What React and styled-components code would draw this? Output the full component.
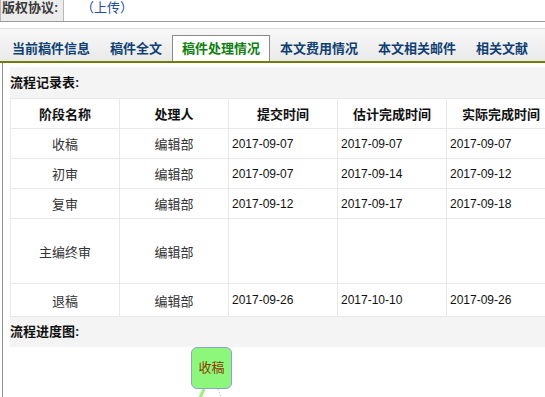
import React from "react";
import styled, { createGlobalStyle } from "styled-components";

const GlobalStyle = createGlobalStyle`
  body {
    margin: 0;
    background: #fff;
    overflow: hidden;
    font-family: "Liberation Sans", Arial, "Noto Sans CJK SC", sans-serif;
    font-size: 12px;
    color: #222;
  }
`;

const Page = styled.div`
  width: 560px;
`;

const CopyrightRow = styled.div`
  display: flex;
  height: 21px;
  border-bottom: 1px solid #9a9a9a;
`;

const CopyrightLabel = styled.div`
  width: 61px;
  padding-left: 1px;
  border-left: 1px solid #b8b8b8;
  border-right: 1px solid #b8b8b8;
  background: #ececec;
  font-weight: bold;
  font-size: 13px;
  line-height: 15px;
  color: #3a3a3a;
`;

const CopyrightValue = styled.div`
  padding-left: 17px;
  font-size: 13px;
  line-height: 15px;
  color: #1d4d9c;
`;

const TabBar = styled.div`
  display: flex;
  align-items: flex-end;
  margin-top: 6px;
  height: 32px;
  padding-left: 2px;
  border-top: 1px solid #dcdcdc;
  border-bottom: 2px solid #6f7d05;
  background: linear-gradient(#f8f8f8, #e9e9e9);
`;

const Tab = styled.div`
  height: 25px;
  padding: 0 9px;
  border: 1px solid ${(p) => (p.$active ? "#8a8a8a" : "transparent")};
  border-bottom: none;
  background: ${(p) => (p.$active ? "#fff" : "transparent")};
  color: ${(p) => (p.$active ? "#108010" : "#103f73")};
  font-weight: bold;
  font-size: 13px;
  line-height: 25px;
  white-space: nowrap;
`;

const Panel = styled.div`
  margin-left: 2px;
  padding: 4px 0 0 7px;
  border-left: 1px solid #8e8e8e;
  height: 400px;
`;

const Inner = styled.div`
  background: #f4f4f4;
`;

const SectionTitle = styled.div`
  height: ${(p) => p.$h}px;
  line-height: ${(p) => p.$h}px;
  font-weight: bold;
  font-size: 13px;
  color: #111;
`;

const Table = styled.table`
  border-collapse: collapse;
  background: #fff;
`;

const HeadCell = styled.th`
  width: 108px;
  height: 29px;
  padding: 0;
  border: 1px solid #e8e8e8;
  font-size: 13px;
  font-weight: bold;
  color: #111;
  text-align: center;
  white-space: nowrap;
`;

const Cell = styled.td`
  height: ${(p) => p.$h || 29}px;
  padding: 0 3px;
  border: 1px solid #e8e8e8;
  font-size: ${(p) => (p.$date ? 12 : 13)}px;
  color: ${(p) => (p.$date ? "#111" : "#333")};
  text-align: ${(p) => (p.$date ? "left" : "center")};
  white-space: nowrap;
`;

const Diagram = styled.div`
  position: relative;
  height: 60px;
  background: #fff;
`;

const Node = styled.div`
  position: absolute;
  left: 181px;
  top: 0;
  width: 39px;
  height: 40px;
  border: 1px solid #8ea3d2;
  border-radius: 6px;
  background: #8df77c;
  color: #8a3c00;
  font-size: 13px;
  line-height: 40px;
  text-align: center;
`;

const Links = styled.svg`
  position: absolute;
  left: 0;
  top: 0;
`;

const rows = [
  { name: "收稿", who: "编辑部", a: "2017-09-07", b: "2017-09-07", c: "2017-09-07" },
  { name: "初审", who: "编辑部", a: "2017-09-07", b: "2017-09-14", c: "2017-09-12" },
  { name: "复审", who: "编辑部", a: "2017-09-12", b: "2017-09-17", c: "2017-09-18" },
  { name: "主编终审", who: "编辑部", a: "", b: "", c: "", h: 64 },
  { name: "退稿", who: "编辑部", a: "2017-09-26", b: "2017-10-10", c: "2017-09-26", h: 32 },
];

const tabs = ["当前稿件信息", "稿件全文", "稿件处理情况", "本文费用情况", "本文相关邮件", "相关文献"];

export default function App() {
  return (
    <Page>
      <GlobalStyle />
      <CopyrightRow>
        <CopyrightLabel>版权协议:</CopyrightLabel>
        <CopyrightValue>（上传）</CopyrightValue>
      </CopyrightRow>
      <TabBar>
        {tabs.map((t) => (
          <Tab key={t} $active={t === "稿件处理情况"}>
            {t}
          </Tab>
        ))}
      </TabBar>
      <Panel>
        <Inner>
          <SectionTitle $h={31}>流程记录表:</SectionTitle>
          <Table>
            <thead>
              <tr>
                <HeadCell>阶段名称</HeadCell>
                <HeadCell>处理人</HeadCell>
                <HeadCell>提交时间</HeadCell>
                <HeadCell>估计完成时间</HeadCell>
                <HeadCell>实际完成时间</HeadCell>
              </tr>
            </thead>
            <tbody>
              {rows.map((r) => (
                <tr key={r.name}>
                  <Cell $h={r.h}>{r.name}</Cell>
                  <Cell $h={r.h}>{r.who}</Cell>
                  <Cell $h={r.h} $date>{r.a}</Cell>
                  <Cell $h={r.h} $date>{r.b}</Cell>
                  <Cell $h={r.h} $date>{r.c}</Cell>
                </tr>
              ))}
            </tbody>
          </Table>
          <SectionTitle $h={30}>流程进度图:</SectionTitle>
        </Inner>
        <Diagram>
          <Links width="300" height="60">
            <line x1="194" y1="42" x2="188" y2="55" stroke="#9ef07a" strokeWidth="3" />
            <line x1="208" y1="42" x2="213" y2="55" stroke="#8ea3d2" strokeWidth="1" strokeDasharray="1 2" />
          </Links>
          <Node>收稿</Node>
        </Diagram>
      </Panel>
    </Page>
  );
}
